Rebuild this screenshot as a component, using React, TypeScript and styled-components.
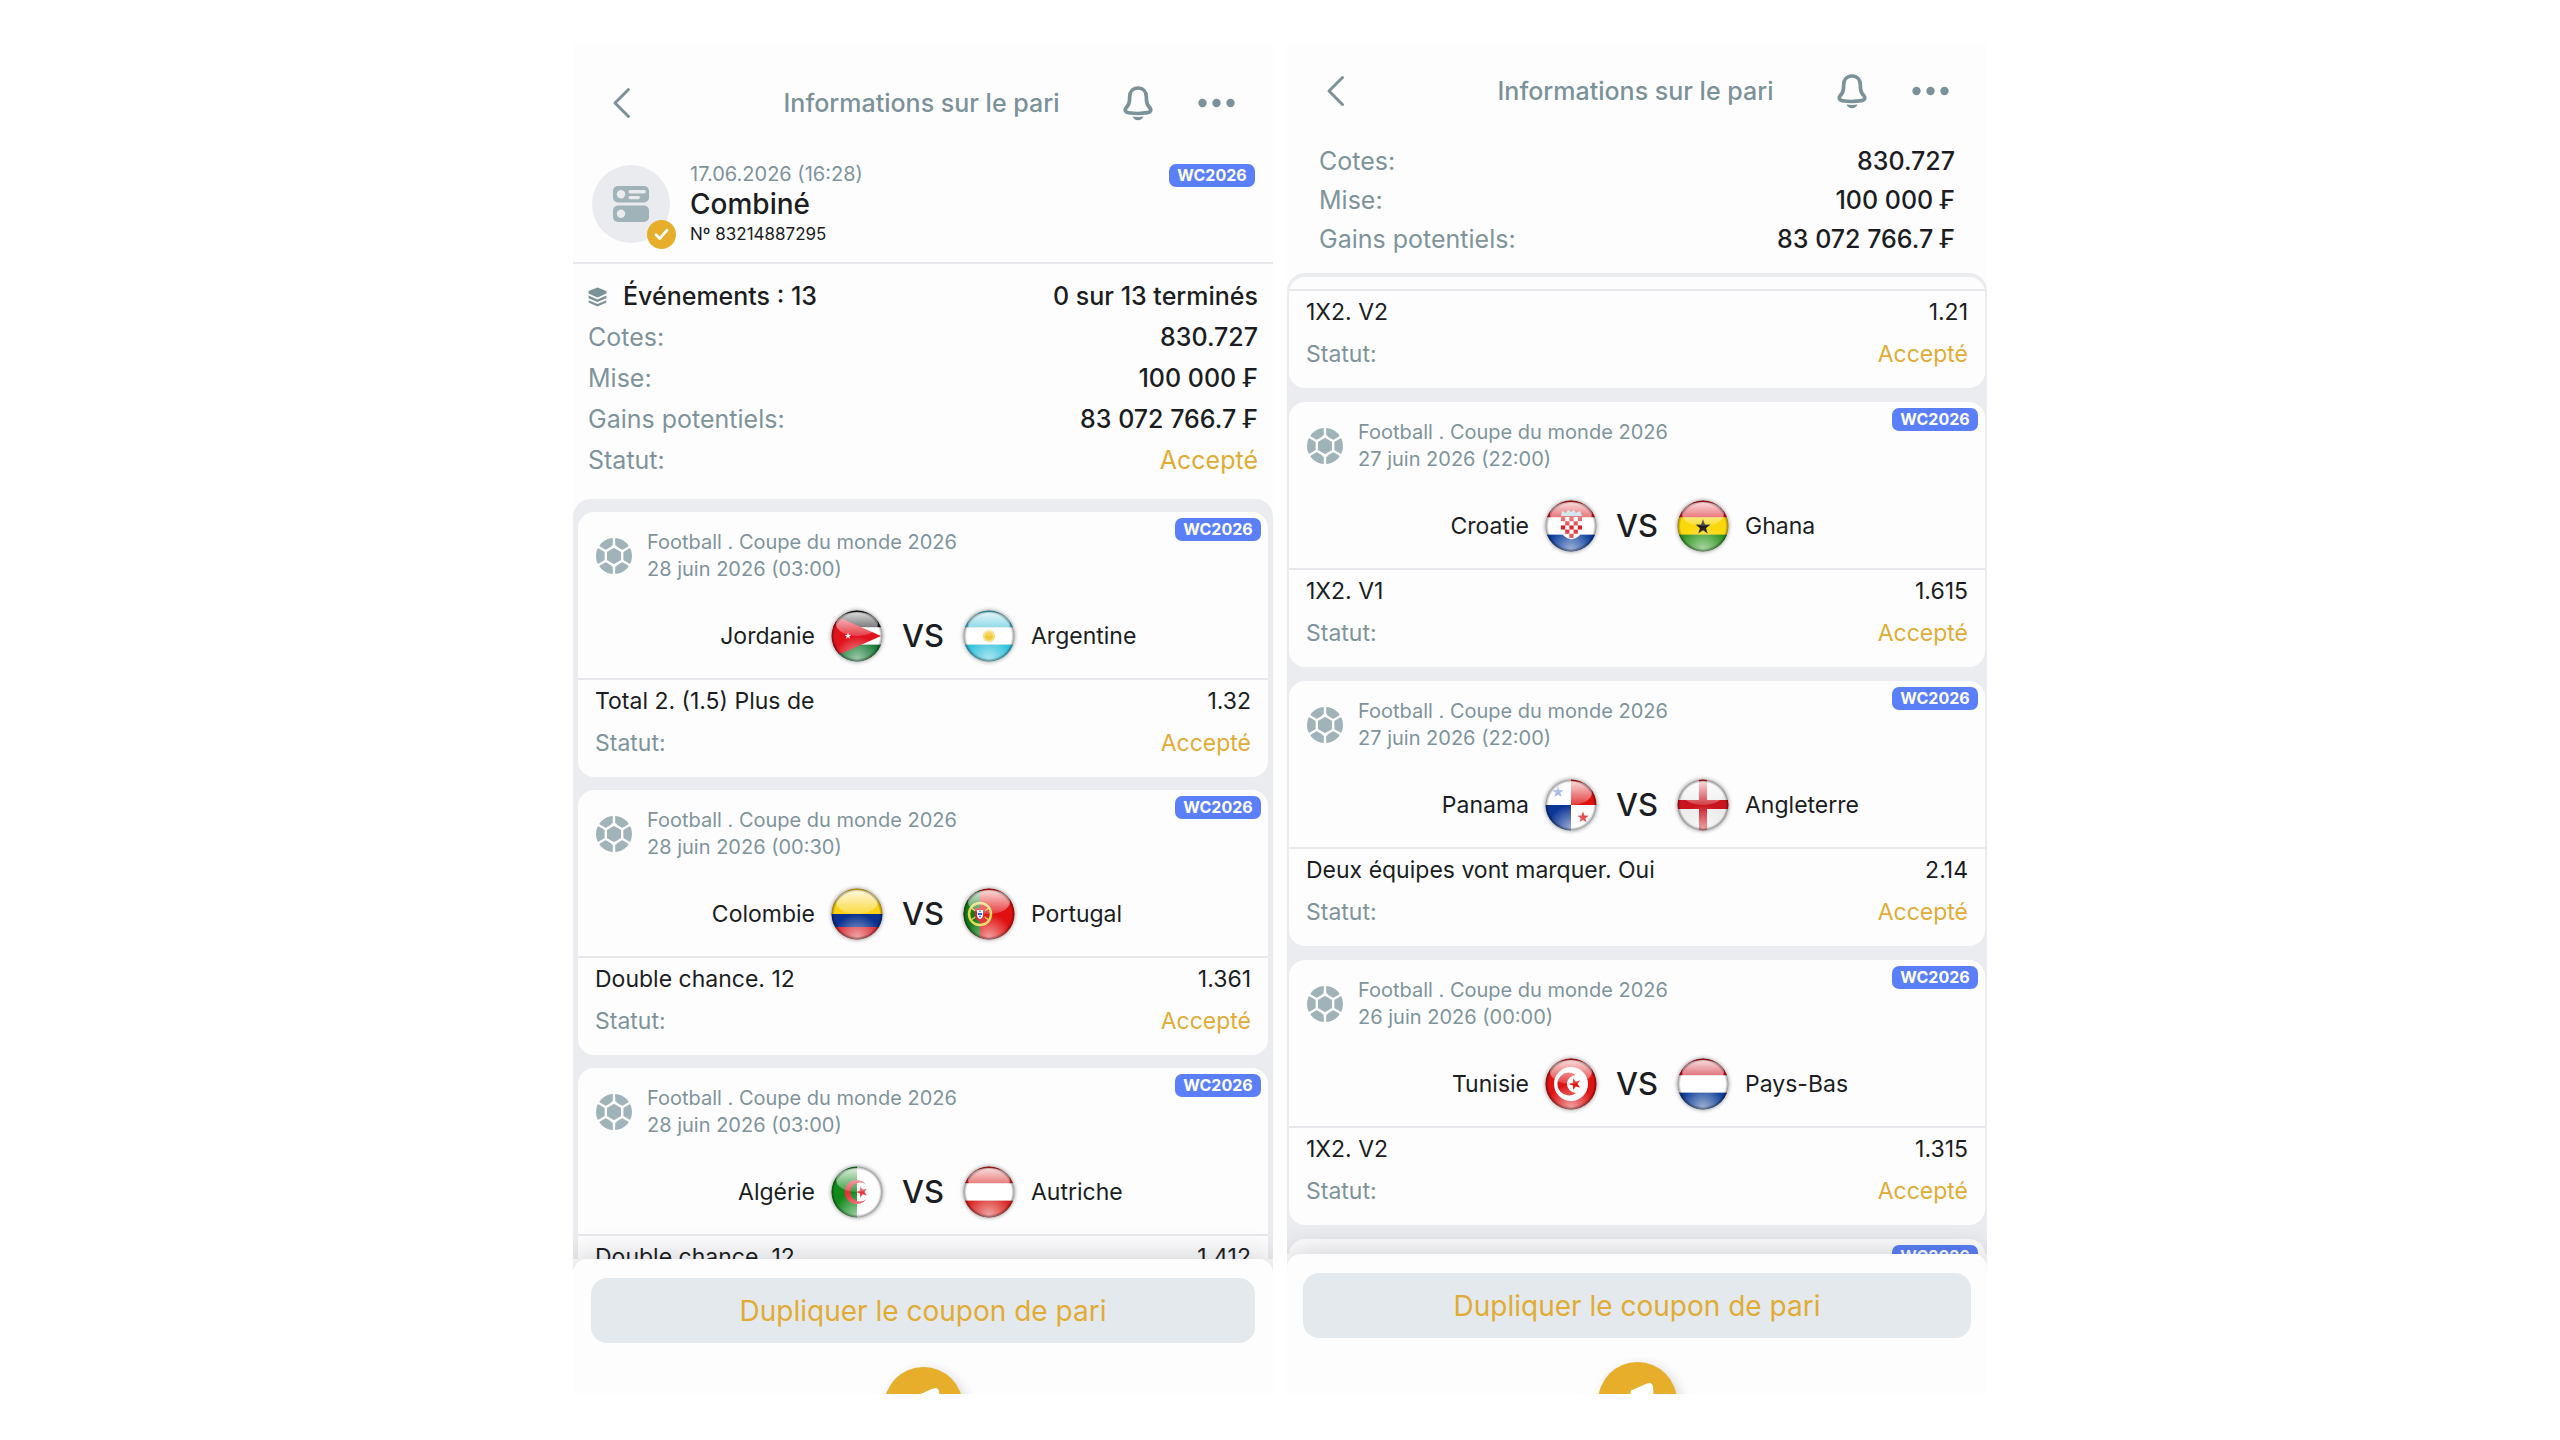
import React, { useId } from 'react';
import styled, { createGlobalStyle } from 'styled-components';

const color = {
  ink: '#1b1d22',
  muted: '#7f949a',
  nav: '#7b9299',
  icon: '#9fb3b8',
  gold: '#e0ac34',
  goldFill: '#e6ae2b',
  tag: '#5b7ff8',
  surface: '#fdfdfe',
  backdrop: '#ebecf0',
  line: '#e6e8ec',
  action: '#e4e9ed',
};

const GlobalStyle = createGlobalStyle`
  *, *::before, *::after { box-sizing: border-box; }
  body {
    margin: 0;
    background: #fff;
    color: ${color.ink};
    font-family: Inter, "Liberation Sans", sans-serif;
  }
  h1, h2, p, dl, dt, dd, ul { margin: 0; padding: 0; font-weight: inherit; }
  button { border: 0; padding: 0; background: none; font: inherit; color: inherit; cursor: pointer; }
`;

/* ---------- layout ---------- */

const Board = styled.main`
  display: flex;
  justify-content: center;
  gap: 14px;
  height: 100vh;
  padding: 44px 16px 46px;
`;

const Phone = styled.section`
  display: flex;
  flex-direction: column;
  flex: 0 1 700px;
  min-width: 0;
  overflow: hidden;
  background: ${color.surface};
`;

const NavBar = styled.header<{ $top: number }>`
  display: grid;
  grid-template-columns: 1fr auto 1fr;
  align-items: center;
  flex: none;
  height: ${(p) => p.$top + 78}px;
  padding: ${(p) => p.$top}px 38px 0 35px;
  color: ${color.nav};
`;

const NavTitle = styled.h1`
  font-size: 25px;
  font-weight: 500;
  line-height: 32px;
`;

const NavButton = styled.button`
  display: flex;
  align-items: center;
`;

const NavActions = styled.div`
  display: flex;
  align-items: center;
  justify-content: flex-end;
  gap: 44px;
`;

const BetHeader = styled.div`
  display: flex;
  align-items: center;
  gap: 20px;
  flex: none;
  padding: 18px 18px 14px 19px;
  border-bottom: 2px solid ${color.line};
`;

const Avatar = styled.div`
  position: relative;
  display: flex;
  align-items: center;
  justify-content: center;
  width: 78px;
  height: 78px;
  border-radius: 50%;
  background: #eaebef;
`;

const AcceptedBadge = styled.span`
  position: absolute;
  right: -6px;
  bottom: -6px;
  display: flex;
  align-items: center;
  justify-content: center;
  width: 29px;
  height: 29px;
  border-radius: 50%;
  background: ${color.goldFill};
`;

const BetIdentity = styled.div`
  flex: 1;
`;

const BetDate = styled.p`
  font-size: 20px;
  line-height: 28px;
  color: ${color.muted};
`;

const BetKind = styled.h2`
  font-size: 28px;
  font-weight: 500;
  line-height: 32px;
`;

const BetNumber = styled.p`
  font-size: 17px;
  line-height: 28px;
`;

const Tag = styled.span`
  display: flex;
  align-items: center;
  justify-content: center;
  width: 86px;
  height: 23px;
  border-radius: 7px;
  background: ${color.tag};
  color: #fff;
  font-size: 16px;
  font-weight: 700;
  line-height: 23px;
`;

const HeaderTag = styled(Tag)`
  align-self: flex-start;
  margin-top: 4px;
`;

const CardTag = styled(Tag)`
  position: absolute;
  top: 6px;
  right: 7px;
`;

const Totals = styled.dl<{ $inset: number; $row: number; $bottom: number }>`
  flex: none;
  padding: 12px ${(p) => p.$inset}px ${(p) => p.$bottom}px;
  font-size: 25px;
  line-height: ${(p) => p.$row}px;
`;

const Pair = styled.div`
  display: flex;
  justify-content: space-between;
`;

const Label = styled.dt<{ $strong?: boolean }>`
  display: flex;
  align-items: center;
  gap: 16px;
  color: ${(p) => (p.$strong ? color.ink : color.muted)};
  font-weight: ${(p) => (p.$strong ? 500 : 400)};
`;

const Value = styled.dd<{ $gold?: boolean }>`
  color: ${(p) => (p.$gold ? color.gold : color.ink)};
  font-weight: ${(p) => (p.$gold ? 400 : 500)};
`;

const EventList = styled.ul<{ $top: number; $side: number; $gap: number }>`
  display: flex;
  flex-direction: column;
  flex: 1;
  gap: ${(p) => p.$gap}px;
  min-height: 0;
  overflow: hidden;
  padding: ${(p) => p.$top}px ${(p) => p.$side}px 0;
  border-radius: 18px 18px 0 0;
  background: ${color.backdrop};
  list-style: none;
`;

const Card = styled.li<{ $scrolled?: boolean }>`
  position: relative;
  flex: none;
  padding-top: ${(p) => (p.$scrolled ? 12 : 0)}px;
  border-radius: 16px;
  background: ${color.surface};
`;

const CardHead = styled.div`
  display: flex;
  align-items: center;
  gap: 15px;
  padding: 17px 16px 0 18px;
`;

const CardMeta = styled.p`
  font-size: 20px;
  line-height: 27px;
  color: ${color.muted};
`;

const Versus = styled.div`
  display: grid;
  grid-template-columns: 1fr auto 1fr;
  align-items: center;
  padding: 27px 16px 16px;
`;

const Team = styled.div<{ $home?: boolean }>`
  display: flex;
  flex-direction: ${(p) => (p.$home ? 'row' : 'row-reverse')};
  align-items: center;
  justify-content: flex-end;
  gap: 16px;
  font-size: 23px;
  line-height: 28px;
`;

const VersusMark = styled.span`
  width: 80px;
  text-align: center;
  font-size: 31px;
  font-weight: 500;
  line-height: 36px;
`;

const Outcome = styled.dl`
  padding: 0 17px 13px;
  border-top: 2px solid ${color.line};
  font-size: 23px;
  line-height: 42px;

  ${Label}, ${Value} { font-weight: 400; }
`;

const Footer = styled.footer<{ $inset: number; $height: number }>`
  position: relative;
  z-index: 1;
  display: flex;
  flex-direction: column;
  align-items: center;
  gap: 24px;
  flex: none;
  height: ${(p) => p.$height}px;
  padding: 19px ${(p) => p.$inset}px 0;
  border-radius: 14px 14px 0 0;
  background: ${color.surface};
  box-shadow: 0 -2px 30px rgba(20, 24, 32, 0.2);
`;

const DuplicateButton = styled.button`
  flex: none;
  width: 100%;
  height: 65px;
  border-radius: 16px;
  background: ${color.action};
  color: ${color.gold};
  font-size: 28px;
  line-height: 34px;
`;

const CouponButton = styled.button`
  flex: none;
  width: 79px;
  height: 79px;
  border-radius: 50%;
  background: ${color.goldFill};
  box-shadow: 4px 3px 12px rgba(20, 24, 32, 0.16);
`;

const FlagFrame = styled.svg`
  display: block;
  width: 52px;
  height: 52px;
  border-radius: 50%;
  filter: drop-shadow(0 0 2px rgba(0, 0, 0, 0.45));
`;

/* ---------- icons ---------- */

const BackIcon = () => (
  <svg width="24" height="34" viewBox="0 0 24 34" fill="none" stroke="currentColor" strokeWidth="3" strokeLinecap="round" strokeLinejoin="round">
    <path d="M20.500 3.500 7 17l13.500 13.500" />
  </svg>
);

const BellIcon = () => (
  <svg width="32" height="36" viewBox="0 0 32 36">
    <path
      d="M16 3c-5 0-8.300 3.600-8.300 8.500 0 7-1.200 8.600-3.600 11.300-1.900 2.200-.7 4.400 2.200 4.900 6.200 1 13.200 1 19.400 0 2.900-.5 4.100-2.700 2.200-4.900-2.400-2.700-3.600-4.300-3.600-11.300 0-4.900-3.300-8.500-8.300-8.500Z"
      fill="none"
      stroke="currentColor"
      strokeWidth="3.700"
      strokeLinejoin="round"
    />
    <path d="M10.500 31.500c3.600.5 7.400.5 11 0-.9 2.300-2.900 3.700-5.500 3.700s-4.600-1.400-5.500-3.700Z" fill="currentColor" />
  </svg>
);

const MoreIcon = () => (
  <svg width="37" height="10" viewBox="0 0 37 10" fill="currentColor">
    <circle cx="4.500" cy="5" r="4.200" />
    <circle cx="18.500" cy="5" r="4.200" />
    <circle cx="32.500" cy="5" r="4.200" />
  </svg>
);

const ComboIcon = () => (
  <svg width="36" height="36" viewBox="0 0 36 36">
    <rect width="36" height="16.500" rx="5" fill={color.icon} />
    <rect y="19.500" width="36" height="16.500" rx="5" fill={color.icon} />
    <g fill="#eaebef">
      <circle cx="8" cy="8.300" r="4.200" />
      <rect x="15.500" y="4" width="17.500" height="3.600" rx="1.800" />
      <rect x="15.500" y="10" width="11.500" height="3.200" rx="1.600" />
      <circle cx="8" cy="27.700" r="4.200" />
    </g>
  </svg>
);

const CheckIcon = () => (
  <svg width="15" height="13" viewBox="0 0 15 13" fill="none" stroke="#fff" strokeWidth="2.800" strokeLinecap="round" strokeLinejoin="round">
    <path d="m2 6.800 3.800 3.800L13 2.200" />
  </svg>
);

const LayersIcon = () => (
  <svg width="19" height="20" viewBox="0 0 19 20" fill={color.nav}>
    <path d="M9.500.4 18.400 4v2.600L9.500 10.500.6 6.600V4Z" />
    <path d="m.6 8.600 8.900 3.800 8.900-3.800v2.600l-8.900 3.900-8.900-3.900Z" />
    <path d="m.6 13.200 8.900 3.800 8.900-3.800v2.400l-8.900 4-8.900-4Z" />
  </svg>
);

const BallIcon = () => (
  <svg width="36" height="36" viewBox="0 0 36 36">
    <circle cx="18" cy="18" r="18" fill={color.icon} />
    <g fill="none" stroke={color.surface} strokeWidth="2.400">
      <path d="m18 8.500 8.200 4.700v9.600L18 27.500l-8.200-4.700v-9.600Z" />
      <path d="M18 8.500V-1M18 27.500V37M26.200 13.200l9-5.200M26.200 22.800l9 5.200M9.800 13.200l-9-5.200M9.800 22.800l-9 5.200" />
    </g>
    <g fill={color.surface}>
      <path d="m18 9.800-3.400-1.500L18 6.500l3.400 1.800ZM18 26.200l-3.400 1.500 3.400 1.800 3.400-1.800Z" />
      <path d="m33.500 5 2.500 6-4-1.500ZM33.500 31l2.500-6-4 1.500ZM2.500 5 0 11l4-1.500ZM2.500 31 0 25l4 1.500Z" />
    </g>
  </svg>
);

const CouponIcon = () => (
  <svg width="79" height="79" viewBox="0 0 79 79" fill="#fff">
    <path d="M33 28.500 49 21.600q5-2 6 3l1 15-26 4Z" />
  </svg>
);

/* ---------- flags ---------- */

const star = (cx: number, cy: number, r: number, turn = -90) =>
  Array.from({ length: 10 }, (_, i) => {
    const a = ((turn + i * 36) * Math.PI) / 180;
    const d = i % 2 ? r * 0.4 : r;
    return `${(cx + d * Math.cos(a)).toFixed(2)},${(cy + d * Math.sin(a)).toFixed(2)}`;
  }).join(' ');

const Stripes = ({ of }: { of: [string, string, string] }) => (
  <>
    <rect width="52" height="17.400" fill={of[0]} />
    <rect y="17.300" width="52" height="17.500" fill={of[1]} />
    <rect y="34.700" width="52" height="17.300" fill={of[2]} />
  </>
);

const designs: Record<string, React.ReactNode> = {
  jordan: (
    <>
      <Stripes of={['#1a1a1a', '#fff', '#157a35']} />
      <path d="M-6 1 50 26-6 51Z" fill="#e0121c" />
      <polygon points={star(17, 26, 3.4)} fill="#fff" />
    </>
  ),
  argentina: (
    <>
      <Stripes of={['#45c0d6', '#fff', '#2fc2dc']} />
      <circle cx="26" cy="26" r="6.200" fill="#f6dc7a" />
      <circle cx="26" cy="26" r="4" fill="#efc62f" />
    </>
  ),
  colombia: (
    <>
      <rect width="52" height="26" fill="#fbd116" />
      <rect y="26" width="52" height="13" fill="#0a318f" />
      <rect y="39" width="52" height="13" fill="#d8232a" />
    </>
  ),
  portugal: (
    <>
      <rect width="52" height="52" fill="#e01010" />
      <rect width="17" height="52" fill="#127a1c" />
      <circle cx="17" cy="26" r="11" fill="none" stroke="#e8d34a" strokeWidth="2.500" />
      <path d="M8 20 26 32M8 32 26 20" stroke="#e8d34a" strokeWidth="1.500" />
      <path d="M12 20h10v7q0 5-5 6.500Q12 32 12 27Z" fill="#e2202a" />
      <path d="M14 22h6v5q0 3-3 4.200Q14 30 14 27Z" fill="#fff" />
      <path d="M17 22.500v7M14.800 26h4.400" stroke="#2a64c4" strokeWidth="1.800" strokeDasharray="1.600 1" />
    </>
  ),
  algeria: (
    <>
      <rect width="52" height="52" fill="#fff" />
      <rect width="26" height="52" fill="#118a1c" />
      <path d="M35 18.500a12 12 0 1 0 0 15 9.600 9.600 0 1 1 0-15Z" fill="#e5323a" />
      <polygon points={star(31, 26, 6, 180)} fill="#e5323a" />
    </>
  ),
  austria: <Stripes of={['#d9231f', '#fff', '#d9231f']} />,
  croatia: (
    <>
      <Stripes of={['#d8161d', '#fff', '#0b3d9c']} />
      <path d="M16 17h21v12q0 8-10.500 10.500Q16 37 16 29Z" fill="#fff" />
      <g fill="#dc1f28">
        {[0, 1, 2, 3, 4].map((r) =>
          [0, 1, 2, 3, 4].map((c) =>
            (r + c) % 2 === 0 && !(r === 4 && (c === 0 || c === 4)) ? (
              <rect key={`${r}-${c}`} x={16 + c * 4.2} y={17 + r * 4.2} width="4.200" height="4.200" />
            ) : null,
          ),
        )}
      </g>
      <path d="M16 16l1-5 4 2 2-3 3 2 3-2 2 3 4-2 2 5Z" fill="#a6cfe0" />
    </>
  ),
  ghana: (
    <>
      <Stripes of={['#d8161d', '#fbd80e', '#2f981f']} />
      <polygon points={star(26, 27, 8)} fill="#161616" />
    </>
  ),
  panama: (
    <>
      <rect width="52" height="52" fill="#fff" />
      <path d="M26 0h26v26H26Z" fill="#dd1111" />
      <path d="M0 26h26v26H0Z" fill="#0b3596" />
      <polygon points={star(13, 13, 6)} fill="#4d74cc" />
      <polygon points={star(38, 38.5, 6)} fill="#e0282c" />
    </>
  ),
  england: (
    <>
      <rect width="52" height="52" fill="#ececec" />
      <path d="M22 0h8v52h-8ZM0 21h52v9H0Z" fill="#c9151d" />
    </>
  ),
  tunisia: (
    <>
      <rect width="52" height="52" fill="#de1414" />
      <circle cx="26" cy="26" r="17" fill="#fff" />
      <path d="M31 17a11.500 11.500 0 1 0 0 18 9 9 0 1 1 0-18Z" fill="#de1414" />
      <polygon points={star(30, 26, 6.4, 180)} fill="#de1414" />
    </>
  ),
  netherlands: <Stripes of={['#cc1220', '#fff', '#0c3c96']} />,
};

const Flag = ({ name }: { name: string }) => {
  const id = useId();
  return (
    <FlagFrame viewBox="0 0 52 52" role="img" aria-label={name}>
      <defs>
        <clipPath id={`${id}c`}>
          <circle cx="26" cy="26" r="25.500" />
        </clipPath>
        <linearGradient id={`${id}t`} x1="0" y1="0" x2="0" y2="1">
          <stop offset="0" stopColor="#fff" stopOpacity="0.850" />
          <stop offset="1" stopColor="#fff" stopOpacity="0.180" />
        </linearGradient>
        <radialGradient id={`${id}b`} cx="0.500" cy="0.950" r="0.450">
          <stop offset="0" stopColor="#fff" stopOpacity="0.600" />
          <stop offset="1" stopColor="#fff" stopOpacity="0" />
        </radialGradient>
        <radialGradient id={`${id}r`}>
          <stop offset="0.860" stopColor="#000" stopOpacity="0" />
          <stop offset="1" stopColor="#000" stopOpacity="0.500" />
        </radialGradient>
      </defs>
      <g clipPath={`url(#${id}c)`}>
        {designs[name]}
        <rect width="52" height="52" fill={`url(#${id}b)`} />
        <ellipse cx="26" cy="14" rx="21" ry="12" fill={`url(#${id}t)`} />
        <rect width="52" height="52" fill={`url(#${id}r)`} />
      </g>
    </FlagFrame>
  );
};

/* ---------- parts ---------- */

type Side = [name: string, flag: string];
type Match = { when: string; home: Side; away: Side; bet: string; odds: string };

const Nav = ({ top }: { top: number }) => (
  <NavBar $top={top}>
    <NavButton aria-label="Retour">
      <BackIcon />
    </NavButton>
    <NavTitle>Informations sur le pari</NavTitle>
    <NavActions>
      <NavButton aria-label="Notifications">
        <BellIcon />
      </NavButton>
      <NavButton aria-label="Plus">
        <MoreIcon />
      </NavButton>
    </NavActions>
  </NavBar>
);

const Row = ({ label, value, gold, strong, icon }: { label: string; value: string; gold?: boolean; strong?: boolean; icon?: React.ReactNode }) => (
  <Pair>
    <Label $strong={strong}>
      {icon}
      {label}
    </Label>
    <Value $gold={gold}>{value}</Value>
  </Pair>
);

const Result = ({ bet, odds }: { bet: string; odds: string }) => (
  <Outcome>
    <Row label={bet} value={odds} strong />
    <Row label="Statut:" value="Accepté" gold />
  </Outcome>
);

const MatchCard = ({ when, home, away, bet, odds }: Match) => (
  <Card>
    <CardTag>WC2026</CardTag>
    <CardHead>
      <BallIcon />
      <CardMeta>
        Football . Coupe du monde 2026
        <br />
        {when}
      </CardMeta>
    </CardHead>
    <Versus>
      <Team $home>
        {home[0]}
        <Flag name={home[1]} />
      </Team>
      <VersusMark>VS</VersusMark>
      <Team>
        {away[0]}
        <Flag name={away[1]} />
      </Team>
    </Versus>
    <Result bet={bet} odds={odds} />
  </Card>
);

const Actions = ({ inset, height }: { inset: number; height: number }) => (
  <Footer $inset={inset} $height={height}>
    <DuplicateButton>Dupliquer le coupon de pari</DuplicateButton>
    <CouponButton aria-label="Coupon">
      <CouponIcon />
    </CouponButton>
  </Footer>
);

const overviewMatches: Match[] = [
  { when: '28 juin 2026 (03:00)', home: ['Jordanie', 'jordan'], away: ['Argentine', 'argentina'], bet: 'Total 2. (1.5) Plus de', odds: '1.32' },
  { when: '28 juin 2026 (00:30)', home: ['Colombie', 'colombia'], away: ['Portugal', 'portugal'], bet: 'Double chance. 12', odds: '1.361' },
  { when: '28 juin 2026 (03:00)', home: ['Algérie', 'algeria'], away: ['Autriche', 'austria'], bet: 'Double chance. 12', odds: '1.412' },
];

const scrolledMatches: Match[] = [
  { when: '27 juin 2026 (22:00)', home: ['Croatie', 'croatia'], away: ['Ghana', 'ghana'], bet: '1X2. V1', odds: '1.615' },
  { when: '27 juin 2026 (22:00)', home: ['Panama', 'panama'], away: ['Angleterre', 'england'], bet: 'Deux équipes vont marquer. Oui', odds: '2.14' },
  { when: '26 juin 2026 (00:00)', home: ['Tunisie', 'tunisia'], away: ['Pays-Bas', 'netherlands'], bet: '1X2. V2', odds: '1.315' },
];

const NextCard = styled(Card)`
  height: 265px;
`;

export default function App() {
  return (
    <>
      <GlobalStyle />
      <Board>
        <Phone>
          <Nav top={20} />
          <BetHeader>
            <Avatar>
              <ComboIcon />
              <AcceptedBadge>
                <CheckIcon />
              </AcceptedBadge>
            </Avatar>
            <BetIdentity>
              <BetDate>17.06.2026 (16:28)</BetDate>
              <BetKind>Combiné</BetKind>
              <BetNumber>Nº 83214887295</BetNumber>
            </BetIdentity>
            <HeaderTag>WC2026</HeaderTag>
          </BetHeader>
          <Totals $inset={15} $row={41} $bottom={18}>
            <Row label="Événements : 13" value="0 sur 13 terminés" strong icon={<LayersIcon />} />
            <Row label="Cotes:" value="830.727" />
            <Row label="Mise:" value="100 000 ₣" />
            <Row label="Gains potentiels:" value="83 072 766.7 ₣" />
            <Row label="Statut:" value="Accepté" gold />
          </Totals>
          <EventList $top={13} $side={5} $gap={13}>
            {overviewMatches.map((m) => (
              <MatchCard key={m.home[0]} {...m} />
            ))}
          </EventList>
          <Actions inset={18} height={135} />
        </Phone>

        <Phone>
          <Nav top={8} />
          <Totals $inset={32} $row={39} $bottom={14}>
            <Row label="Cotes:" value="830.727" />
            <Row label="Mise:" value="100 000 ₣" />
            <Row label="Gains potentiels:" value="83 072 766.7 ₣" />
          </Totals>
          <EventList $top={4} $side={2} $gap={14}>
            <Card $scrolled>
              <Result bet="1X2. V2" odds="1.21" />
            </Card>
            {scrolledMatches.map((m) => (
              <MatchCard key={m.home[0]} {...m} />
            ))}
            <NextCard>
              <CardTag>WC2026</CardTag>
            </NextCard>
          </EventList>
          <Actions inset={16} height={140} />
        </Phone>
      </Board>
    </>
  );
}
